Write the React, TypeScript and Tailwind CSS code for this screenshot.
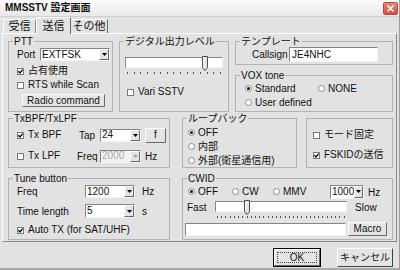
import React from 'react';

const FONT = "font-['Liberation_Sans','Noto_Sans_CJK_JP',sans-serif]";
const SUNKEN = 'border border-t-[#858585] border-l-[#858585] border-r-[#f4f4f4] border-b-[#f4f4f4]';
const RAISED = 'border border-t-white border-l-white border-r-[#6a6a6a] border-b-[#6a6a6a]';

type GroupProps = { label: string; className?: string; children: React.ReactNode };

const Group = ({ label, className = '', children }: GroupProps) => (
  <fieldset className={`min-w-0 border border-[#b2b2b2] pl-[4px] ${className}`}>
    <legend className="px-[1px] leading-[13px]">{label}</legend>
    {children}
  </fieldset>
);

type CheckProps = { label: string; checked?: boolean; className?: string };

const Check = ({ label, checked = false, className = '' }: CheckProps) => (
  <div className={`flex items-center gap-[4px] ${className}`}>
    <span className="flex h-[7px] w-[7px] shrink-0 items-center justify-center border border-[#7a7a7a] bg-white">
      {checked && (
        <svg width="5" height="5" viewBox="0 0 5 5">
          <path d="M0.4 2.2L2 3.9L4.7 0.7" fill="none" stroke="#000" strokeWidth="1.3" />
        </svg>
      )}
    </span>
    <span className="whitespace-nowrap leading-none">{label}</span>
  </div>
);

const Radio = ({ label, checked = false, className = '' }: CheckProps) => (
  <div className={`flex items-center gap-[3px] ${className}`}>
    <span className="flex h-[7px] w-[7px] shrink-0 items-center justify-center rounded-full border border-[#8a8a8a] bg-white">
      {checked && <span className="h-[3px] w-[3px] rounded-full bg-black" />}
    </span>
    <span className="whitespace-nowrap leading-none">{label}</span>
  </div>
);

type SelectProps = { value: string; className?: string; disabled?: boolean };

const Select = ({ value, className = '', disabled = false }: SelectProps) => (
  <div className={`flex items-stretch ${disabled ? 'bg-[#f2f2f2]' : 'bg-white'} ${SUNKEN} ${className}`}>
    <span className={`flex flex-1 items-center pl-[1px] leading-none ${disabled ? 'text-[#a8a8a8]' : ''}`}>{value}</span>
    <span className={`flex w-[10px] items-center justify-center bg-[#e4e4e4] ${RAISED}`}>
      <svg width="5" height="3" viewBox="0 0 5 3">
        <path d="M0 0H5L2.5 3Z" fill={disabled ? '#a0a0a0' : '#000'} />
      </svg>
    </span>
  </div>
);

type TrackProps = { className: string; thumbClass: string; ticks: number };

const Trackbar = ({ className, thumbClass, ticks }: TrackProps) => (
  <div className={className}>
    <div className={`relative h-[11px] bg-white ${SUNKEN}`}>
      <svg className={`absolute -top-[2px] ${thumbClass}`} width="6" height="15" viewBox="0 0 6 15">
        <path d="M0.5 0.5H5.5V11.5L3 14.5L0.5 11.5Z" fill="#e6e6e6" stroke="#4a4a4a" strokeWidth="1" />
        <path d="M1.5 1.5V11" stroke="#fff" strokeWidth="1" />
      </svg>
    </div>
    <div className="mx-[2px] mt-[4px] flex justify-between">
      {Array.from({ length: ticks }).map((_, i) => (
        <span key={i} className="h-[2px] w-px bg-[#555]" />
      ))}
    </div>
  </div>
);

const Button = ({ label, className = '' }: { label: string; className?: string }) => (
  <div className={`flex items-center justify-center bg-[#e4e4e4] leading-none ${RAISED} ${className}`}>{label}</div>
);

export default function App() {
  return (
    <div className={`flex h-[270px] w-[400px] flex-col overflow-hidden border-r border-b-[2px] border-r-[#9c9c9c] border-b-[#a8a8a8] bg-[#e2e2e2] text-[10px] text-[#111] ${FONT}`}>
      {/* title bar */}
      <div className="flex h-[17px] shrink-0 items-center justify-between border-b border-[#cfcfcf] bg-gradient-to-b from-[#fbfbfb] to-[#e8e8e8] pl-[5px] pr-[1px]">
        <span className="text-[10px] font-bold leading-none">MMSSTV 設定画面</span>
        <div className="flex h-[13px] w-[15px] items-center justify-center rounded-[2px] border border-[#b84a3e] bg-gradient-to-b from-[#e88a7c] to-[#cf4d3c]">
          <svg width="7" height="7" viewBox="0 0 7 7">
            <path d="M0.5 0.5L6.5 6.5M6.5 0.5L0.5 6.5" stroke="#fff" strokeWidth="1.5" />
          </svg>
        </div>
      </div>

      {/* tabs */}
      <div className="flex h-[16px] shrink-0 items-end pl-[3px] text-[11px]">
        <div className="flex h-[14px] w-[33px] items-center justify-center border-t border-l border-r border-t-white border-l-white border-r-[#8a8a8a] leading-none">受信</div>
        <div className="relative z-10 -mb-px flex h-[17px] w-[35px] items-center justify-center border-t border-l border-r border-t-white border-l-white border-r-[#6a6a6a] bg-[#e2e2e2] leading-none">送信</div>
        <div className="flex h-[14px] w-[37px] items-center justify-center border-t border-r border-t-white border-r-[#6a6a6a] leading-none">その他</div>
      </div>

      {/* panel */}
      <div className="ml-[2px] flex h-[209px] w-[395px] shrink-0 flex-col border border-t-white border-l-white border-r-[#8a8a8a] border-b-[#8a8a8a] pt-[1px] pl-[5px]">
        {/* row 1 */}
        <div className="flex h-[77px] gap-[6px]">
          <Group label="PTT" className="h-[77px] w-[105px]">
            <div className="flex flex-col pl-[4px]">
              <div className="flex h-[13px] items-center">
                <span className="w-[23px]">Port</span>
                <Select value="EXTFSK" className="h-[13px] w-[70px]" />
              </div>
              <Check label="占有使用" checked className="mt-[3px] h-[14px]" />
              <Check label="RTS while Scan" className="h-[14px]" />
              <Button label="Radio command" className="mt-[2px] ml-[5px] h-[13px] w-[83px]" />
            </div>
          </Group>

          <Group label="デジタル出力レベル" className="h-[77px] w-[110px]">
            <div className="flex flex-col pl-[1px]">
              <Trackbar className="mt-[9px] w-[98px]" thumbClass="left-[76px]" ticks={15} />
              <Check label="Vari SSTV" className="mt-[11px] ml-[2px] h-[14px]" />
            </div>
          </Group>

          <div className="flex w-[158px] flex-col gap-[4px]">
            <Group label="テンプレート" className="h-[30px] w-[158px]">
              <div className="-mt-[1px] flex h-[15px] items-center pl-[12px]">
                <span className="w-[37px]">Callsign</span>
                <div className={`flex h-[15px] w-[89px] items-center bg-white pl-[2px] ${SUNKEN}`}>JE4NHC</div>
              </div>
            </Group>
            <Group label="VOX tone" className="h-[43px] w-[158px]">
              <div className="flex flex-col pl-[5px]">
                <div className="flex h-[13px] items-center">
                  <Radio label="Standard" checked className="w-[73px]" />
                  <Radio label="NONE" />
                </div>
                <Radio label="User defined" className="mt-[1px] h-[13px]" />
              </div>
            </Group>
          </div>
        </div>

        {/* row 2 */}
        <div className="flex h-[56px]">
          <Group label="TxBPF/TxLPF" className="h-[56px] w-[162px]">
            <div className="flex flex-col pl-[4px]">
              <div className="mt-[2px] flex h-[16px] items-center">
                <Check label="Tx BPF" checked className="w-[60px]" />
                <span className="w-[23px] pl-[2px]">Tap</span>
                <Select value="24" className="h-[13px] w-[41px]" />
                <Button label="f" className="ml-[4px] h-[15px] w-[21px]" />
              </div>
              <div className="mt-[5px] flex h-[16px] items-center">
                <Check label="Tx LPF" className="w-[60px]" />
                <span className="w-[23px]">Freq</span>
                <Select value="2000" disabled className="h-[13px] w-[41px]" />
                <span className="ml-[4px]">Hz</span>
              </div>
            </div>
          </Group>

          <Group label="ループバック" className="ml-[12px] h-[56px] w-[115px]">
            <div className="mt-[1px] flex flex-col gap-[1px] pl-[1px]">
              <Radio label="OFF" checked className="h-[13px]" />
              <Radio label="内部" className="h-[13px]" />
              <Radio label="外部(衛星通信用)" className="h-[13px]" />
            </div>
          </Group>

          <div className="mt-[6px] ml-[9px] flex h-[50px] w-[87px] flex-col border border-[#b2b2b2] pt-[9px] pl-[6px]">
            <Check label="モード固定" className="h-[14px]" />
            <Check label="FSKIDの送信" checked className="mt-[6px] h-[14px]" />
          </div>
        </div>

        {/* row 3 */}
        <div className="mt-[4px] flex h-[68px]">
          <Group label="Tune button" className="h-[68px] w-[162px]">
            <div className="flex flex-col pl-[4px]">
              <div className="flex h-[13px] items-center">
                <span className="w-[68px]">Freq</span>
                <Select value="1200" className="h-[13px] w-[50px]" />
                <span className="ml-[7px]">Hz</span>
              </div>
              <div className="mt-[6px] flex h-[14px] items-center">
                <span className="w-[68px]">Time length</span>
                <Select value="5" className="h-[14px] w-[50px]" />
                <span className="ml-[7px]">s</span>
              </div>
              <Check label="Auto TX (for SAT/UHF)" checked className="mt-[5px] h-[14px]" />
            </div>
          </Group>

          <Group label="CWID" className="ml-[12px] h-[68px] w-[211px]">
            <div className="flex flex-col">
              <div className="flex h-[13px] items-center pl-[1px]">
                <Radio label="OFF" checked className="w-[44px]" />
                <Radio label="CW" className="w-[41px]" />
                <Radio label="MMV" className="w-[57px]" />
                <Select value="1000" className="h-[14px] w-[34px]" />
                <span className="ml-[4px] self-end leading-none">Hz</span>
              </div>
              <div className="mt-[3px] flex h-[18px] items-start">
                <span className="mt-[2px] w-[28px] leading-none">Fast</span>
                <Trackbar className="w-[132px]" thumbClass="left-[28px]" ticks={31} />
                <span className="mt-[2px] ml-[8px] leading-none">Slow</span>
              </div>
              <div className="mt-[3px] flex h-[14px] items-center">
                <div className={`-ml-[2px] h-[13px] w-[161px] bg-white ${SUNKEN}`} />
                <Button label="Macro" className="ml-[2px] h-[14px] w-[39px]" />
              </div>
            </div>
          </Group>
        </div>
      </div>

      {/* dialog buttons */}
      <div className="flex flex-1 items-start justify-end gap-[16px] pt-[6px] pr-[6px]">
        <div className="h-[19px] w-[48px] border border-black">
          <div className={`flex h-full items-center justify-center bg-[#e4e4e4] p-[2px] ${RAISED}`}>
            <div className="flex h-full w-full items-center justify-center border border-dotted border-[#444] leading-none">OK</div>
          </div>
        </div>
        <Button label="キャンセル" className="h-[19px] w-[56px] border-r-[#404040] border-b-[#404040]" />
      </div>
    </div>
  );
}
